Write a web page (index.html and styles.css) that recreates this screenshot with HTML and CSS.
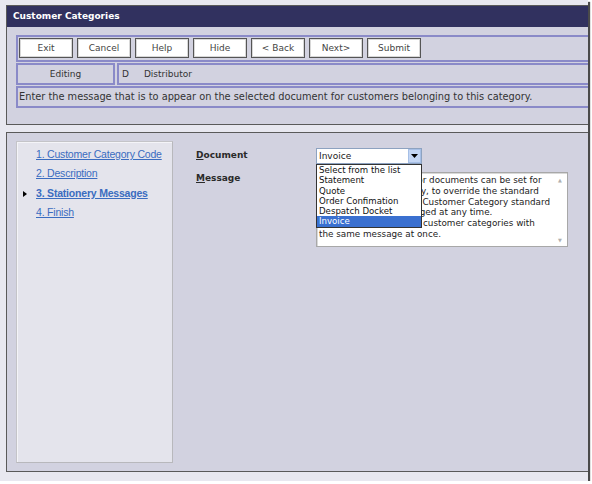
FILE: index.html
```html
<!DOCTYPE html>
<html>
<head>
<meta charset="utf-8">
<link rel="stylesheet" href="styles.css">
</head>
<body>
<div class="window">
  <div class="panel top">
    <div class="titlebar">Customer Categories</div>
    <div class="rows">
      <div class="row toolbar">
        <button class="btn">Exit</button>
        <button class="btn">Cancel</button>
        <button class="btn">Help</button>
        <button class="btn">Hide</button>
        <button class="btn">&lt; Back</button>
        <button class="btn">Next&gt;</button>
        <button class="btn">Submit</button>
      </div>
      <div class="row info">
        <div class="cell mode">Editing</div>
        <div class="cell cat"><span class="code">D</span><span>Distributor</span></div>
      </div>
      <div class="row msg">Enter the message that is to appear on the selected document for customers belonging to this category.</div>
    </div>
  </div>
  <div class="panel main">
    <nav class="steps">
      <a class="step">1. Customer Category Code</a>
      <a class="step">2. Description</a>
      <a class="step current">3. Stationery Messages</a>
      <a class="step">4. Finish</a>
    </nav>
    <div class="form">
      <div class="field doc">
        <label class="label"><u>D</u>ocument</label>
        <div class="select">
          <span class="value">Invoice</span>
          <span class="arrow"><svg width="7" height="4" viewBox="0 0 7 4"><path d="M0 0H7L3.5 4Z" fill="#000"/></svg></span>
          <ul class="options">
            <li>Select from the list</li>
            <li>Statement</li>
            <li>Quote</li>
            <li>Order Confimation</li>
            <li>Despatch Docket</li>
            <li class="sel">Invoice</li>
          </ul>
        </div>
      </div>
      <div class="field msgfield">
        <label class="label"><u>M</u>essage</label>
        <div class="textarea">
          <div class="text">Stationery messages for documents can be set for<br>each customer category, to override the standard<br>system messages. The Customer Category standard<br>messages can be changed at any time.<br>You can also update all customer categories with<br>the same message at once.</div>
          <div class="scroll"><span class="up">&#9650;</span><span class="down">&#9660;</span></div>
        </div>
      </div>
    </div>
  </div>
</div>
</body>
</html>
```
FILE: styles.css
```css
* { box-sizing: border-box; }
html, body { margin: 0; padding: 0; background: #ffffff; }
body { font-family: "DejaVu Sans", Verdana, sans-serif; font-size: 9px; color: #333; }
.window {
  width: 588px; height: 481px;
  background: #e8e8f0;
  box-shadow: 2px 2px 1px #4a4a4a;
  padding: 5px 0 0 6px;
  display: flex; flex-direction: column;
}
.panel { border: 1px solid #5a5a5a; border-right: none; background: #d2d2e0; }
.panel.top { height: 120px; }
.titlebar {
  height: 21px; background: #31315f; color: #fff; font-weight: bold;
  font-size: 9px; line-height: 21px; padding-left: 6px;
}
.rows { margin: 8px 0 0 9px; display: flex; flex-direction: column; gap: 1px; }
.row { border: 2px solid #8a8ac8; border-right: none; }
.toolbar { height: 27px; padding: 1px 1px; display: flex; gap: 4px; }
.btn {
  width: 54px; height: 20px; background: #fff; border: 1px solid #555;
  box-shadow: inset 0 0 0 1px #d8d8d8;
  font-family: "DejaVu Sans", Verdana, sans-serif; font-size: 9px; color: #444; padding: 0;
}
.info { border: none; display: flex; gap: 2px; height: 22px; }
.cell { border: 2px solid #8a8ac8; line-height: 18px; color: #333; }
.mode { width: 99px; text-align: center; }
.cat { flex: 1; border-right: none; padding-left: 3px; display: flex; gap: 15px; }
.msg { height: 22px; line-height: 18px; padding-left: 1px; color: #333; font-size: 9.8px; white-space: nowrap; }
.panel.main { margin-top: 7px; height: 340px; padding: 8px 0 8px 9px; display: flex; }
.steps {
  width: 157px; background: #e4e4ec;
  border: 1px solid #c4c4c8; border-right-color: #b8b8bc; border-bottom-color: #b8b8bc;
  box-shadow: inset 1px 1px 0 #f4f4f8;
  padding: 3px 0 0 19px; display: flex; flex-direction: column;
}
.step {
  font-family: "Liberation Sans", Arial, sans-serif; font-size: 10.5px; letter-spacing: -0.2px;
  color: #3a6cc0; text-decoration: underline; line-height: 19.3px; position: relative;
}
.step.current { font-weight: bold; }
.step.current::before {
  content: ""; position: absolute; left: -13px; top: 7px;
  border-left: 4px solid #000; border-top: 3px solid transparent; border-bottom: 3px solid transparent;
}
.form { padding: 7px 0 0 23px; display: flex; flex-direction: column; gap: 8px; }
.field { display: flex; }
.label { width: 120px; font-weight: bold; color: #2a2a2a; font-size: 9px; padding-top: 2px; }
.msgfield .label { margin-top: -1px; }
.select {
  position: relative; width: 106px; height: 16px; background: #fff;
  border: 1px solid #8da2c0; display: flex; align-items: center; justify-content: space-between;
}
.value { padding-left: 2px; color: #222; }
.arrow {
  width: 13px; height: 14px; background: #c4d6f4; border: 1px solid #a6bfe6;
  display: flex; align-items: center; justify-content: center;
}
.options {
  position: absolute; left: -1px; top: 15px; width: 106px; margin: 0; padding: 0;
  list-style: none; background: #fff; border: 1px solid #333; z-index: 2;
  font-size: 8.6px; line-height: 10.3px; color: #111;
}
.options li { padding-left: 2px; white-space: nowrap; }
.options li.sel { background: #3a70d0; color: #fff; }
.textarea {
  width: 252px; height: 75px; background: #fff; border: 1px solid #a8a8a8;
  box-shadow: inset 1px 1px 0 #d8d8d8; display: flex;
}
.text { flex: 1; padding: 2px 0 0 2px; font-size: 8.8px; line-height: 10.8px; color: #222; white-space: nowrap; overflow: hidden; }
.scroll {
  width: 14px; display: flex; flex-direction: column; justify-content: space-between;
  align-items: center; color: #b0b0b0; font-size: 5px; padding: 4px 0 3px;
}
```
